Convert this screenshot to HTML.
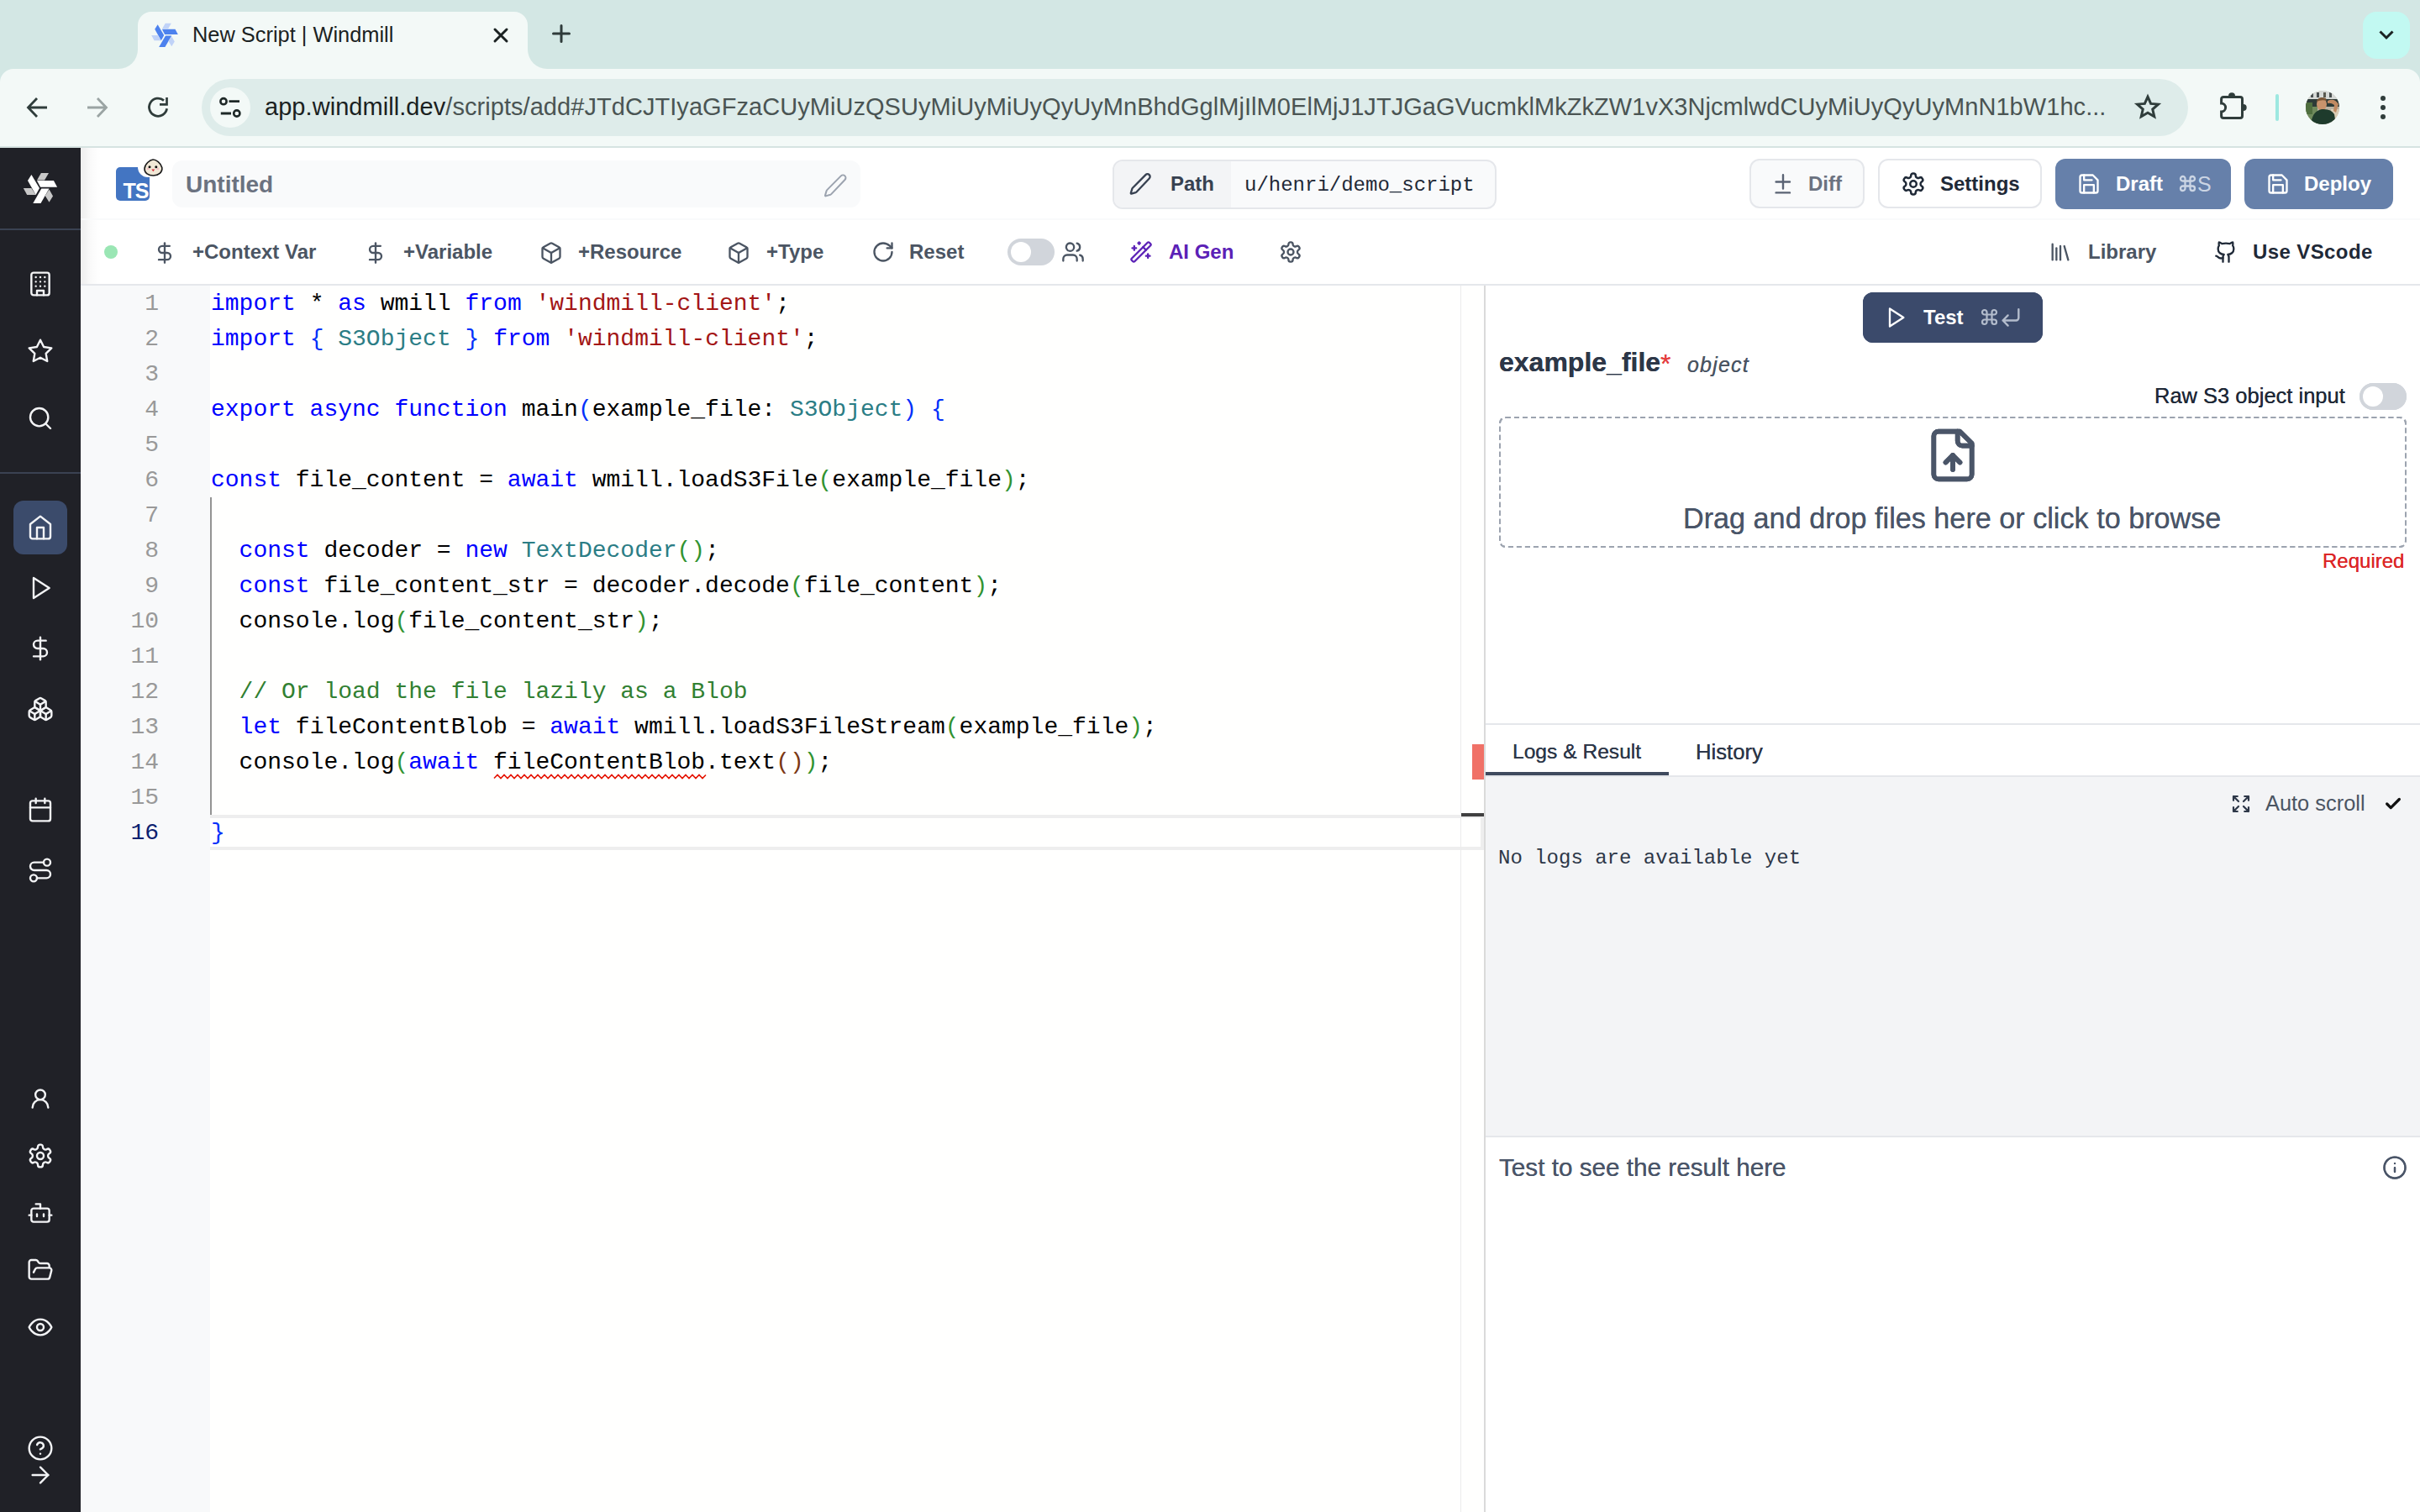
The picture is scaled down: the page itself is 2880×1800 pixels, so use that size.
<!DOCTYPE html>
<html><head><meta charset="utf-8">
<style>
*{box-sizing:border-box;margin:0;padding:0}
html,body{width:2880px;height:1800px;overflow:hidden;background:#fff;font-family:"Liberation Sans",sans-serif}
.a{position:absolute}
.t{position:absolute;white-space:pre;line-height:40px;height:40px}
.m{font-family:"Liberation Mono",monospace}
svg{position:absolute;overflow:visible}
/* chrome */
#tabstrip{left:0;top:0;width:2880px;height:100px;background:#d3e7e4}
#toolbar{left:0;top:82px;width:2880px;height:94px;background:#f3f9f7;border-radius:16px 16px 0 0;border-bottom:2px solid #d6e3e1}
#tab{left:164px;top:14px;width:464px;height:70px;background:#f3f9f7;border-radius:16px 16px 0 0}
.flare{width:23px;height:23px;top:59px;background:#f3f9f7}
.flare:after{content:"";position:absolute;left:0;top:0;width:23px;height:23px;background:#d3e7e4}
#fl1{left:141px}
#fl1:after{border-bottom-right-radius:23px}
#fl2{left:628px}
#fl2:after{border-bottom-left-radius:23px}
#urlbar{left:240px;top:94px;width:2364px;height:68px;border-radius:34px;background:#deecea}
#siteinfo{left:250px;top:104px;width:48px;height:48px;border-radius:24px;background:#f3f9f7}
/* app */
#sidebar{left:0;top:176px;width:96px;height:1624px;background:#202127;}
#sbshadow{left:96px;top:176px;width:24px;height:1624px;background:linear-gradient(90deg,rgba(0,0,0,0.07),rgba(0,0,0,0.02) 50%,rgba(0,0,0,0))}
</style></head><body>
<!-- ============ BROWSER CHROME ============ -->
<div id="tabstrip" class="a"></div>
<div id="toolbar" class="a"></div>
<div id="tab" class="a"></div>
<div id="fl1" class="a flare"></div>
<div id="fl2" class="a flare"></div>
<div id="urlbar" class="a"></div>
<div id="siteinfo" class="a"></div>

<!-- favicon -->
<svg style="left:174px;top:20px" width="44" height="44" viewBox="0 0 56 56">
<g fill="#4d82ee"><polygon points="17.4,11.9 13,18.9 22.6,35.9 27,28.1"/><polygon points="24,18.9 43.9,18.9 48.1,26.7 28.1,26.7"/><polygon points="29.3,28.5 38.5,28.5 28.5,45.9 19.3,45.9"/></g>
<g fill="#c0d3f8"><polygon points="28.9,10 38,10 33,18.5 24,18.5"/><polygon points="7.8,28.1 17.4,28.1 22.6,36.1 12.2,36.1"/><polygon points="38.5,29.6 43,37.4 38.5,44.8 33.7,37"/></g>
</svg>
<div class="t" style="left:229px;top:21px;font-size:25.4px;color:#1b2222">New Script | Windmill</div>
<svg style="left:587px;top:33px" width="18" height="18" viewBox="0 0 18 18"><path d="M2 2L16 16M16 2L2 16" stroke="#1b2222" stroke-width="3" stroke-linecap="round"/></svg>
<svg style="left:657px;top:29px" width="22" height="22" viewBox="0 0 22 22"><path d="M11 1.5V20.5M1.5 11H20.5" stroke="#2f3b3a" stroke-width="3" stroke-linecap="round"/></svg>
<!-- nav -->
<svg style="left:30px;top:114px" width="28" height="28" viewBox="0 0 28 28"><path d="M3.5 14H26M14 3L3.5 14L14 25" fill="none" stroke="#2f3d3b" stroke-width="2.8"/></svg>
<svg style="left:102px;top:114px" width="28" height="28" viewBox="0 0 28 28"><path d="M2 14H24.5M14 3L24.5 14L14 25" fill="none" stroke="#9aa4a3" stroke-width="2.8"/></svg>
<svg style="left:174px;top:114px" width="28" height="28" viewBox="0 0 28 28"><path d="M24.6 15.3A10.6 10.6 0 1 1 21 5.6" fill="none" stroke="#2f3d3b" stroke-width="2.8"/><path d="M16 10.35H24.5V2" fill="none" stroke="#2f3d3b" stroke-width="2.7"/></svg>
<svg style="left:256px;top:112px" width="36" height="32" viewBox="0 0 36 32"><circle cx="10" cy="8.7" r="3.6" fill="none" stroke="#1e2827" stroke-width="2.6"/><path d="M16.5 8.7H29M6.8 23H19" stroke="#1e2827" stroke-width="2.8"/><circle cx="25.8" cy="23" r="3.6" fill="none" stroke="#1e2827" stroke-width="2.6"/></svg>
<div class="t" style="left:315px;top:107px;font-size:29px;letter-spacing:0.055px;color:#4a5453"><span style="color:#1a2121">app.windmill.dev</span>/scripts/add#JTdCJTIyaGFzaCUyMiUzQSUyMiUyMiUyQyUyMnBhdGglMjIlM0ElMjJ1JTJGaGVucmklMkZkZW1vX3NjcmlwdCUyMiUyQyUyMnN1bW1hc...</div>
<svg style="left:2541px;top:112px" width="30" height="30" viewBox="0 0 24 24"><path d="M12 2.5l2.9 6.6 7.1.6-5.4 4.7 1.6 7-6.2-3.7-6.2 3.7 1.6-7L2 9.7l7.1-.6z" fill="none" stroke="#2f3d3b" stroke-width="2.4" stroke-linejoin="miter"/></svg>
<svg style="left:2636px;top:104px" width="44" height="44" viewBox="0 0 44 44"><path d="M7.6 19V13.9A2.5 2.5 0 0 1 10.1 11.4H30A2.5 2.5 0 0 1 32.5 13.9V34A2.5 2.5 0 0 1 30 36.5H10.1A2.5 2.5 0 0 1 7.6 34V29A5 5 0 0 0 7.6 19Z" fill="none" stroke="#2f3d3b" stroke-width="3"/><path d="M16 10.2A4 4 0 0 1 24 10.2Z" fill="#2f3d3b"/><path d="M33.7 20A4 4 0 0 1 33.7 28Z" fill="#2f3d3b"/></svg>
<div class="a" style="left:2708px;top:112px;width:4px;height:32px;border-radius:2px;background:#9de8e0"></div>
<svg style="left:2744px;top:108px" width="40" height="40" viewBox="0 0 40 40"><defs><clipPath id="avc"><circle cx="20" cy="20" r="20"/></clipPath></defs><g clip-path="url(#avc)">
<rect width="40" height="40" fill="#b9b3a3"/>
<rect x="0" y="0" width="40" height="10" fill="#d6d9d6"/>
<rect x="6" y="2" width="3" height="6" fill="#4a5050"/><rect x="13" y="2" width="3" height="6" fill="#4a5050"/><rect x="21" y="2" width="3" height="6" fill="#5a5a50"/><rect x="28" y="2" width="3" height="6" fill="#4a5050"/>
<rect x="0" y="10" width="40" height="9" fill="#2c3a37"/>
<rect x="0" y="19" width="14" height="21" fill="#6f8a5c"/>
<rect x="0" y="14" width="8" height="14" fill="#4f6f3f"/>
<rect x="30" y="22" width="10" height="18" fill="#d9ccb4"/>
<path d="M26 12Q34 8 39 16L36 26L33 24L34 17Q30 14 26 15Z" fill="#c08a62"/>
<ellipse cx="19" cy="16" rx="6" ry="7.5" fill="#c8936c"/>
<path d="M13 12Q16 6 24 9L25 12Q19 10 13 13Z" fill="#7a5636"/>
<path d="M6 40Q8 24 19 22Q30 21 34 28L36 40Z" fill="#1e3b2c"/>
</g></svg>

<div class="a" style="left:2833px;top:114px;width:6px;height:6px;border-radius:3px;background:#2f3d3b"></div>
<div class="a" style="left:2833px;top:125px;width:6px;height:6px;border-radius:3px;background:#2f3d3b"></div>
<div class="a" style="left:2833px;top:136px;width:6px;height:6px;border-radius:3px;background:#2f3d3b"></div>
<div class="a" style="left:2812px;top:14px;width:56px;height:56px;border-radius:16px;background:#c2f9f2"></div>
<svg style="left:2831px;top:36px" width="18" height="11" viewBox="0 0 18 11"><path d="M1.5 1.5L9 9L16.5 1.5" fill="none" stroke="#1b2222" stroke-width="3"/></svg>

<!-- ============ APP ============ -->
<div id="sidebar" class="a"></div>

<div id="sbshadow" class="a"></div>
<!-- sidebar logo -->
<svg style="left:20px;top:196px" width="56" height="56" viewBox="0 0 56 56">
<g fill="#ffffff"><polygon points="17.4,11.9 13,18.9 22.6,35.9 27,28.1"/><polygon points="24,18.9 43.9,18.9 48.1,26.7 28.1,26.7"/><polygon points="29.3,28.5 38.5,28.5 28.5,45.9 19.3,45.9"/></g>
<g fill="#c8c8c8"><polygon points="28.9,10 38,10 33,18.5 24,18.5"/><polygon points="7.8,28.1 17.4,28.1 22.6,36.1 12.2,36.1"/><polygon points="38.5,29.6 43,37.4 38.5,44.8 33.7,37"/></g>
</svg>
<div class="a" style="left:0;top:272px;width:96px;height:2px;background:#3a4252"></div>
<div class="a" style="left:0;top:562px;width:96px;height:2px;background:#3a4252"></div>
<div class="a" style="left:16px;top:596px;width:64px;height:64px;border-radius:12px;background:#3b4b6b"></div>
<!-- sidebar icons (lucide-ish, 24 viewBox) -->

<svg style="left:32.0px;top:322.0px" width="32" height="32" viewBox="0 0 24 24" fill="none" stroke="#f3f4f6" stroke-width="1.8" stroke-linecap="round" stroke-linejoin="round"><rect x="4" y="2" width="16" height="20" rx="2"/><path d="M9 22v-4h6v4"/><path d="M8 6h.01M16 6h.01M12 6h.01M12 10h.01M12 14h.01M16 10h.01M16 14h.01M8 10h.01M8 14h.01"/></svg>
<svg style="left:32.0px;top:402.0px" width="32" height="32" viewBox="0 0 24 24" fill="none" stroke="#f3f4f6" stroke-width="1.8" stroke-linecap="round" stroke-linejoin="round"><polygon points="12 2 15.09 8.26 22 9.27 17 14.14 18.18 21.02 12 17.77 5.82 21.02 7 14.14 2 9.27 8.91 8.26 12 2"/></svg>
<svg style="left:32.0px;top:482.0px" width="32" height="32" viewBox="0 0 24 24" fill="none" stroke="#f3f4f6" stroke-width="1.8" stroke-linecap="round" stroke-linejoin="round"><circle cx="11" cy="11" r="8"/><path d="m21 21-4.3-4.3"/></svg>
<svg style="left:32.0px;top:612.0px" width="32" height="32" viewBox="0 0 24 24" fill="none" stroke="#f3f4f6" stroke-width="1.8" stroke-linecap="round" stroke-linejoin="round"><path d="m3 9 9-7 9 7v11a2 2 0 0 1-2 2H5a2 2 0 0 1-2-2z"/><path d="M9 22V12h6v10"/></svg>
<svg style="left:32.0px;top:684.0px" width="32" height="32" viewBox="0 0 24 24" fill="none" stroke="#f3f4f6" stroke-width="1.8" stroke-linecap="round" stroke-linejoin="round"><polygon points="6 3 20 12 6 21 6 3"/></svg>
<svg style="left:32.0px;top:756.0px" width="32" height="32" viewBox="0 0 24 24" fill="none" stroke="#f3f4f6" stroke-width="1.8" stroke-linecap="round" stroke-linejoin="round"><line x1="12" x2="12" y1="2" y2="22"/><path d="M17 5H9.5a3.5 3.5 0 0 0 0 7h5a3.5 3.5 0 0 1 0 7H6"/></svg>
<svg style="left:32.0px;top:828.0px" width="32" height="32" viewBox="0 0 24 24" fill="none" stroke="#f3f4f6" stroke-width="1.8" stroke-linecap="round" stroke-linejoin="round"><path d="M2.97 12.92A2 2 0 0 0 2 14.63v3.24a2 2 0 0 0 .97 1.71l3 1.8a2 2 0 0 0 2.06 0L12 19v-5.5l-5-3-4.03 2.42Z"/><path d="m7 16.5-4.74-2.85"/><path d="m7 16.5 5-3"/><path d="M7 16.5v5.17"/><path d="M12 13.5V19l3.97 2.38a2 2 0 0 0 2.06 0l3-1.8a2 2 0 0 0 .97-1.71v-3.24a2 2 0 0 0-.97-1.71L17 10.5l-5 3Z"/><path d="m17 16.5-5-3"/><path d="m17 16.5 4.74-2.85"/><path d="M17 16.5v5.17"/><path d="M7.97 4.42A2 2 0 0 0 7 6.13v4.37l5 3 5-3V6.13a2 2 0 0 0-.97-1.71l-3-1.8a2 2 0 0 0-2.06 0l-3 1.8Z"/><path d="M12 8 7.26 5.15"/><path d="m12 8 4.74-2.85"/><path d="M12 13.5V8"/></svg>
<svg style="left:32.0px;top:948.0px" width="32" height="32" viewBox="0 0 24 24" fill="none" stroke="#f3f4f6" stroke-width="1.8" stroke-linecap="round" stroke-linejoin="round"><rect width="18" height="18" x="3" y="4" rx="2"/><path d="M16 2v4M8 2v4M3 10h18"/></svg>
<svg style="left:32.0px;top:1020.0px" width="32" height="32" viewBox="0 0 24 24" fill="none" stroke="#f3f4f6" stroke-width="1.8" stroke-linecap="round" stroke-linejoin="round"><circle cx="6" cy="19" r="3"/><path d="M9 19h8.5a3.5 3.5 0 0 0 0-7h-11a3.5 3.5 0 0 1 0-7H15"/><circle cx="18" cy="5" r="3"/></svg>
<svg style="left:34.0px;top:1294.0px" width="28" height="28" viewBox="0 0 24 24" fill="none" stroke="#f3f4f6" stroke-width="2.05" stroke-linecap="round" stroke-linejoin="round"><circle cx="12" cy="8" r="5"/><path d="M20 21a8 8 0 0 0-16 0"/></svg>
<svg style="left:32.0px;top:1360.0px" width="32" height="32" viewBox="0 0 24 24" fill="none" stroke="#f3f4f6" stroke-width="1.8" stroke-linecap="round" stroke-linejoin="round"><path d="M12.22 2h-.44a2 2 0 0 0-2 2v.18a2 2 0 0 1-1 1.73l-.43.25a2 2 0 0 1-2 0l-.15-.08a2 2 0 0 0-2.73.73l-.22.38a2 2 0 0 0 .73 2.73l.15.1a2 2 0 0 1 1 1.72v.51a2 2 0 0 1-1 1.74l-.15.09a2 2 0 0 0-.73 2.73l.22.38a2 2 0 0 0 2.73.73l.15-.08a2 2 0 0 1 2 0l.43.25a2 2 0 0 1 1 1.73V20a2 2 0 0 0 2 2h.44a2 2 0 0 0 2-2v-.18a2 2 0 0 1 1-1.73l.43-.25a2 2 0 0 1 2 0l.15.08a2 2 0 0 0 2.73-.73l.22-.39a2 2 0 0 0-.73-2.73l-.15-.08a2 2 0 0 1-1-1.74v-.5a2 2 0 0 1 1-1.74l.15-.09a2 2 0 0 0 .73-2.73l-.22-.38a2 2 0 0 0-2.73-.73l-.15.08a2 2 0 0 1-2 0l-.43-.25a2 2 0 0 1-1-1.73V4a2 2 0 0 0-2-2z"/><circle cx="12" cy="12" r="3"/></svg>
<svg style="left:32.0px;top:1428.0px" width="32" height="32" viewBox="0 0 24 24" fill="none" stroke="#f3f4f6" stroke-width="1.8" stroke-linecap="round" stroke-linejoin="round"><path d="M12 8V4H8"/><rect width="16" height="12" x="4" y="8" rx="2"/><path d="M2 14h2M20 14h2M15 13v2M9 13v2"/></svg>
<svg style="left:32.0px;top:1496.0px" width="32" height="32" viewBox="0 0 24 24" fill="none" stroke="#f3f4f6" stroke-width="1.8" stroke-linecap="round" stroke-linejoin="round"><path d="m6 14 1.5-2.9A2 2 0 0 1 9.24 10H20a2 2 0 0 1 1.94 2.5l-1.54 6a2 2 0 0 1-1.95 1.5H4a2 2 0 0 1-2-2V5a2 2 0 0 1 2-2h3.9a2 2 0 0 1 1.69.9l.81 1.2a2 2 0 0 0 1.67.9H18a2 2 0 0 1 2 2v2"/></svg>
<svg style="left:32.0px;top:1564.0px" width="32" height="32" viewBox="0 0 24 24" fill="none" stroke="#f3f4f6" stroke-width="1.8" stroke-linecap="round" stroke-linejoin="round"><path d="M2 12s3-7 10-7 10 7 10 7-3 7-10 7-10-7-10-7Z"/><circle cx="12" cy="12" r="3"/></svg>
<svg style="left:32.0px;top:1708.0px" width="32" height="32" viewBox="0 0 24 24" fill="none" stroke="#f3f4f6" stroke-width="1.8" stroke-linecap="round" stroke-linejoin="round"><circle cx="12" cy="12" r="10"/><path d="M9.09 9a3 3 0 0 1 5.83 1c0 2-3 3-3 3"/><path d="M12 17h.01"/></svg>
<svg style="left:32.0px;top:1740.0px" width="32" height="32" viewBox="0 0 24 24" fill="none" stroke="#f3f4f6" stroke-width="1.8" stroke-linecap="round" stroke-linejoin="round"><path d="M5 12h14"/><path d="m12 5 7 7-7 7"/></svg>
<!-- ======= HEADER ROW 1 ======= -->
<div class="a" style="left:138px;top:199px;width:40px;height:40px;border-radius:5px;background:#4375c2"></div>
<div class="a" style="left:163.7px;top:186.6px;width:24.8px;height:24.8px;border-radius:13px;background:#fff"></div>
<div class="t" style="left:146.5px;top:206.5px;font-size:25px;font-weight:bold;color:#fff;letter-spacing:-0.9px">TS</div>
<svg style="left:170.5px;top:188.5px" width="23" height="21" viewBox="0 0 23 21"><path d="M11 1C14.5 0.8 20.5 5 21.8 10.5C22.5 16 17.5 20 11.5 20C5.5 20 1 17 1 12C1 6.5 7.5 1.2 11 1Z" fill="#f1e8d6" stroke="#1a1a1a" stroke-width="1.6"/><circle cx="7" cy="9.8" r="1.5" fill="#111"/><circle cx="14.8" cy="9.8" r="1.5" fill="#111"/><ellipse cx="5" cy="12" rx="1.6" ry="1" fill="#f2b9c2"/><ellipse cx="16.8" cy="12" rx="1.6" ry="1" fill="#f2b9c2"/><path d="M9.3 12.6H13.3L11.3 15.2Z" fill="#d9303a"/></svg>
<div class="a" style="left:205px;top:191px;width:819px;height:56px;border-radius:12px;background:#f9fafb"></div>
<div class="t" style="left:221px;top:200px;font-size:28px;font-weight:bold;color:#6b7280">Untitled</div>
<svg style="left:978px;top:206px" width="32" height="30" viewBox="0 0 24 24"><path d="M21.2 6.4a2.6 2.6 0 0 0-3.7-3.7L4.2 16.1a2 2 0 0 0-.5.8l-1.3 4.4a.5.5 0 0 0 .6.6l4.4-1.3a2 2 0 0 0 .8-.5z" fill="none" stroke="#9ca3af" stroke-width="1.6" stroke-linejoin="round"/></svg>

<div class="a" style="left:1324px;top:189.5px;width:457px;height:59px;border-radius:12px;border:2px solid #e5e7eb;background:#f9fafb;overflow:hidden"><div class="a" style="left:0;top:0;width:139px;height:59px;background:#f3f4f6"></div></div>
<svg style="left:1343px;top:205px" width="28" height="28" viewBox="0 0 24 24"><path d="M21.2 6.4a2.6 2.6 0 0 0-3.7-3.7L4.2 16.1a2 2 0 0 0-.5.8l-1.3 4.4a.5.5 0 0 0 .6.6l4.4-1.3a2 2 0 0 0 .8-.5z" fill="none" stroke="#374151" stroke-width="2" stroke-linejoin="round"/></svg>
<div class="t" style="left:1393px;top:199px;font-size:24px;font-weight:bold;color:#374151">Path</div>
<div class="t m" style="left:1481px;top:201px;font-size:24px;color:#1f2937">u/henri/demo_script</div>

<div class="a" style="left:2082px;top:189px;width:137px;height:59px;border-radius:12px;border:2px solid #e5e7eb;background:#f9fafb"></div>
<svg style="left:2100px;top:200px" width="40" height="40" viewBox="0 0 40 40"><path d="M22 8.3V24.6M13.6 16.5H30M13.6 29.4H30" fill="none" stroke="#5a6374" stroke-width="2.4" stroke-linecap="round"/></svg>
<div class="t" style="left:2152px;top:199px;font-size:24px;font-weight:bold;color:#6b7280">Diff</div>

<div class="a" style="left:2235px;top:189px;width:195px;height:59px;border-radius:12px;border:2px solid #e5e7eb;background:#fff"></div>
<svg style="left:2261.5px;top:204.0px" width="30" height="30" viewBox="0 0 24 24" fill="none" stroke="#1f2937" stroke-width="2" stroke-linecap="round" stroke-linejoin="round"><path d="M12.22 2h-.44a2 2 0 0 0-2 2v.18a2 2 0 0 1-1 1.73l-.43.25a2 2 0 0 1-2 0l-.15-.08a2 2 0 0 0-2.73.73l-.22.38a2 2 0 0 0 .73 2.73l.15.1a2 2 0 0 1 1 1.72v.51a2 2 0 0 1-1 1.74l-.15.09a2 2 0 0 0-.73 2.73l.22.38a2 2 0 0 0 2.73.73l.15-.08a2 2 0 0 1 2 0l.43.25a2 2 0 0 1 1 1.73V20a2 2 0 0 0 2 2h.44a2 2 0 0 0 2-2v-.18a2 2 0 0 1 1-1.73l.43-.25a2 2 0 0 1 2 0l.15.08a2 2 0 0 0 2.73-.73l.22-.39a2 2 0 0 0-.73-2.73l-.15-.08a2 2 0 0 1-1-1.74v-.5a2 2 0 0 1 1-1.74l.15-.09a2 2 0 0 0 .73-2.73l-.22-.38a2 2 0 0 0-2.73-.73l-.15.08a2 2 0 0 1-2 0l-.43-.25a2 2 0 0 1-1-1.73V4a2 2 0 0 0-2-2z"/><circle cx="12" cy="12" r="3"/></svg>
<div class="t" style="left:2309px;top:199px;font-size:24px;font-weight:bold;color:#1f2937">Settings</div>

<div class="a" style="left:2446px;top:189px;width:209px;height:60px;border-radius:12px;background:#6680aa"></div>
<svg style="left:2472.0px;top:205.0px" width="28" height="28" viewBox="0 0 24 24" fill="none" stroke="#ffffff" stroke-width="2" stroke-linecap="round" stroke-linejoin="round"><path d="M19 21H5a2 2 0 0 1-2-2V5a2 2 0 0 1 2-2h11l5 5v11a2 2 0 0 1-2 2z"/><path d="M17 21v-8H7v8"/><path d="M7 3v5h8"/></svg>
<div class="t" style="left:2518px;top:199px;font-size:24px;font-weight:bold;color:#fff">Draft</div>
<svg style="left:2594px;top:209px" width="19" height="19" viewBox="0 0 19 19"><path d="M6.5 15.25V3.75A2.75 2.75 0 1 0 3.75 6.5H15.25A2.75 2.75 0 1 0 12.5 3.75V15.25A2.75 2.75 0 1 0 15.25 12.5H3.75A2.75 2.75 0 1 0 6.5 15.25Z" fill="none" stroke="#cbd5e4" stroke-width="2.3"/></svg>
<div class="t" style="left:2615px;top:199px;font-size:25px;color:#cbd5e4">S</div>

<div class="a" style="left:2671px;top:189px;width:177px;height:60px;border-radius:12px;background:#6680aa"></div>
<svg style="left:2697.0px;top:205.0px" width="28" height="28" viewBox="0 0 24 24" fill="none" stroke="#ffffff" stroke-width="2" stroke-linecap="round" stroke-linejoin="round"><path d="M19 21H5a2 2 0 0 1-2-2V5a2 2 0 0 1 2-2h11l5 5v11a2 2 0 0 1-2 2z"/><path d="M17 21v-8H7v8"/><path d="M7 3v5h8"/></svg>
<div class="t" style="left:2742px;top:199px;font-size:24px;font-weight:bold;color:#fff">Deploy</div>

<div class="a" style="left:96px;top:260px;width:2784px;height:2px;background:#f9fafb"></div>

<!-- ======= HEADER ROW 2 ======= -->
<div class="a" style="left:124px;top:292px;width:16px;height:16px;border-radius:8px;background:#9ae6b4"></div>
<svg style="left:182.0px;top:287.0px" width="28" height="28" viewBox="0 0 24 24" fill="none" stroke="#4b5563" stroke-width="2" stroke-linecap="round" stroke-linejoin="round"><line x1="12" x2="12" y1="2" y2="22"/><path d="M17 5H9.5a3.5 3.5 0 0 0 0 7h5a3.5 3.5 0 0 1 0 7H6"/></svg>
<div class="t" style="left:229px;top:280px;font-size:24px;color:#4b5563;font-weight:bold;">+Context Var</div>
<svg style="left:432.5px;top:287.0px" width="28" height="28" viewBox="0 0 24 24" fill="none" stroke="#4b5563" stroke-width="2" stroke-linecap="round" stroke-linejoin="round"><line x1="12" x2="12" y1="2" y2="22"/><path d="M17 5H9.5a3.5 3.5 0 0 0 0 7h5a3.5 3.5 0 0 1 0 7H6"/></svg>
<div class="t" style="left:480px;top:280px;font-size:24px;color:#4b5563;font-weight:bold;">+Variable</div>
<svg style="left:642.0px;top:287.0px" width="28" height="28" viewBox="0 0 24 24" fill="none" stroke="#4b5563" stroke-width="2" stroke-linecap="round" stroke-linejoin="round"><path d="M21 8a2 2 0 0 0-1-1.73l-7-4a2 2 0 0 0-2 0l-7 4A2 2 0 0 0 3 8v8a2 2 0 0 0 1 1.73l7 4a2 2 0 0 0 2 0l7-4A2 2 0 0 0 21 16Z"/><path d="m3.3 7 8.7 5 8.7-5"/><path d="M12 22V12"/></svg>
<div class="t" style="left:688px;top:280px;font-size:24px;color:#4b5563;font-weight:bold;">+Resource</div>
<svg style="left:865.0px;top:287.0px" width="28" height="28" viewBox="0 0 24 24" fill="none" stroke="#4b5563" stroke-width="2" stroke-linecap="round" stroke-linejoin="round"><path d="M21 8a2 2 0 0 0-1-1.73l-7-4a2 2 0 0 0-2 0l-7 4A2 2 0 0 0 3 8v8a2 2 0 0 0 1 1.73l7 4a2 2 0 0 0 2 0l7-4A2 2 0 0 0 21 16Z"/><path d="m3.3 7 8.7 5 8.7-5"/><path d="M12 22V12"/></svg>
<div class="t" style="left:912px;top:280px;font-size:24px;color:#4b5563;font-weight:bold;">+Type</div>
<svg style="left:1037.0px;top:286.0px" width="28" height="28" viewBox="0 0 24 24" fill="none" stroke="#4b5563" stroke-width="2" stroke-linecap="round" stroke-linejoin="round"><path d="M21 12a9 9 0 1 1-9-9c2.52 0 4.93 1 6.74 2.74L21 8"/><path d="M21 3v5h-5"/></svg>
<div class="t" style="left:1082px;top:280px;font-size:24px;color:#4b5563;font-weight:bold;">Reset</div>
<div class="a" style="left:1199px;top:284px;width:56px;height:32px;border-radius:16px;background:#d1d5db"></div>
<div class="a" style="left:1203px;top:288px;width:24px;height:24px;border-radius:12px;background:#fff"></div>
<svg style="left:1263.0px;top:286.0px" width="28" height="28" viewBox="0 0 24 24" fill="none" stroke="#4b5563" stroke-width="2" stroke-linecap="round" stroke-linejoin="round"><path d="M16 21v-2a4 4 0 0 0-4-4H6a4 4 0 0 0-4 4v2"/><circle cx="9" cy="7" r="4"/><path d="M22 21v-2a4 4 0 0 0-3-3.87"/><path d="M16 3.13a4 4 0 0 1 0 7.75"/></svg>
<svg style="left:1344.0px;top:286.0px" width="28" height="28" viewBox="0 0 24 24" fill="none" stroke="#5b21b6" stroke-width="2" stroke-linecap="round" stroke-linejoin="round"><path d="m21.64 3.64-1.28-1.28a1.21 1.21 0 0 0-1.72 0L2.36 18.64a1.21 1.21 0 0 0 0 1.72l1.28 1.28a1.2 1.2 0 0 0 1.72 0L21.64 5.36a1.2 1.2 0 0 0 0-1.72"/><path d="m14 7 3 3"/><path d="M5 6v4M19 14v4M10 2v2M7 8H3M21 16h-4M11 3H9"/></svg>
<div class="t" style="left:1391px;top:280px;font-size:24px;color:#5b21b6;font-weight:bold;">AI Gen</div>
<svg style="left:1522.0px;top:286.0px" width="28" height="28" viewBox="0 0 24 24" fill="none" stroke="#4b5563" stroke-width="2" stroke-linecap="round" stroke-linejoin="round"><path d="M12.22 2h-.44a2 2 0 0 0-2 2v.18a2 2 0 0 1-1 1.73l-.43.25a2 2 0 0 1-2 0l-.15-.08a2 2 0 0 0-2.73.73l-.22.38a2 2 0 0 0 .73 2.73l.15.1a2 2 0 0 1 1 1.72v.51a2 2 0 0 1-1 1.74l-.15.09a2 2 0 0 0-.73 2.73l.22.38a2 2 0 0 0 2.73.73l.15-.08a2 2 0 0 1 2 0l.43.25a2 2 0 0 1 1 1.73V20a2 2 0 0 0 2 2h.44a2 2 0 0 0 2-2v-.18a2 2 0 0 1 1-1.73l.43-.25a2 2 0 0 1 2 0l.15.08a2 2 0 0 0 2.73-.73l.22-.39a2 2 0 0 0-.73-2.73l-.15-.08a2 2 0 0 1-1-1.74v-.5a2 2 0 0 1 1-1.74l.15-.09a2 2 0 0 0 .73-2.73l-.22-.38a2 2 0 0 0-2.73-.73l-.15.08a2 2 0 0 1-2 0l-.43-.25a2 2 0 0 1-1-1.73V4a2 2 0 0 0-2-2z"/><circle cx="12" cy="12" r="3"/></svg>
<svg style="left:2438.0px;top:286.0px" width="28" height="28" viewBox="0 0 24 24" fill="none" stroke="#4b5563" stroke-width="2" stroke-linecap="round" stroke-linejoin="round"><path d="m16 6 4 14"/><path d="M12 6v14"/><path d="M8 8v12"/><path d="M4 4v16"/></svg>
<div class="t" style="left:2485px;top:280px;font-size:24px;color:#4b5563;font-weight:bold;">Library</div>
<svg style="left:2635.0px;top:286.0px" width="28" height="28" viewBox="0 0 24 24" fill="none" stroke="#1f2937" stroke-width="2" stroke-linecap="round" stroke-linejoin="round"><path d="M15 22v-4a4.8 4.8 0 0 0-1-3.5c3 0 6-2 6-5.5.08-1.25-.27-2.48-1-3.5.28-1.15.28-2.35 0-3.5 0 0-1 0-3 1.5-2.64-.5-5.36-.5-8 0C6 2 5 2 5 2c-.3 1.15-.3 2.35 0 3.5A5.403 5.403 0 0 0 4 9c0 3.5 3 5.5 6 5.5-.39.49-.68 1.05-.85 1.65-.17.6-.22 1.23-.15 1.85v4"/><path d="M9 18c-4.51 2-5-2-7-2"/></svg>
<div class="t" style="left:2681px;top:280px;font-size:24px;color:#1f2937;font-weight:bold;letter-spacing:0.4px;">Use VScode</div>
<!-- ======= <div class="a" style="left:96px;top:340px;width:154px;height:1460px;background:#f8f9fa"></div>
<div class="a" style="left:250px;top:340px;width:1516px;height:1460px;background:#fffffe"></div>
<div class="a" style="left:250px;top:970px;width:1516px;height:42px;border:4px solid #eeeeee;border-left:none"></div>
<div class="a" style="left:250px;top:592px;width:2px;height:378px;background:#939393"></div>
<div class="a" style="left:1738px;top:340px;width:1px;height:1460px;background:#ececec"></div>
<div class="a" style="left:1752px;top:886px;width:14px;height:42px;background:#f07167"></div>
<div class="a" style="left:1739px;top:968px;width:27px;height:4px;background:#404040"></div>
<div class="a m" style="left:96px;top:341px;width:93px;height:42px;line-height:42px;font-size:28px;text-align:right;color:#999999">1</div>
<div class="a m" style="left:251px;top:341px;height:42px;line-height:42px;font-size:28px;white-space:pre;color:#000"><span style="color:#0000ff">import</span> * <span style="color:#0000ff">as</span> wmill <span style="color:#0000ff">from</span> <span style="color:#a31515">'windmill-client'</span>;</div>
<div class="a m" style="left:96px;top:383px;width:93px;height:42px;line-height:42px;font-size:28px;text-align:right;color:#999999">2</div>
<div class="a m" style="left:251px;top:383px;height:42px;line-height:42px;font-size:28px;white-space:pre;color:#000"><span style="color:#0000ff">import</span> <span style="color:#0431fa">{</span> <span style="color:#2b7d85">S3Object</span> <span style="color:#0431fa">}</span> <span style="color:#0000ff">from</span> <span style="color:#a31515">'windmill-client'</span>;</div>
<div class="a m" style="left:96px;top:425px;width:93px;height:42px;line-height:42px;font-size:28px;text-align:right;color:#999999">3</div>
<div class="a m" style="left:96px;top:467px;width:93px;height:42px;line-height:42px;font-size:28px;text-align:right;color:#999999">4</div>
<div class="a m" style="left:251px;top:467px;height:42px;line-height:42px;font-size:28px;white-space:pre;color:#000"><span style="color:#0000ff">export async function</span> main<span style="color:#0431fa">(</span>example_file: <span style="color:#2b7d85">S3Object</span><span style="color:#0431fa">)</span> <span style="color:#0431fa">{</span></div>
<div class="a m" style="left:96px;top:509px;width:93px;height:42px;line-height:42px;font-size:28px;text-align:right;color:#999999">5</div>
<div class="a m" style="left:96px;top:551px;width:93px;height:42px;line-height:42px;font-size:28px;text-align:right;color:#999999">6</div>
<div class="a m" style="left:251px;top:551px;height:42px;line-height:42px;font-size:28px;white-space:pre;color:#000"><span style="color:#0000ff">const</span> file_content = <span style="color:#0000ff">await</span> wmill.loadS3File<span style="color:#319331">(</span>example_file<span style="color:#319331">)</span>;</div>
<div class="a m" style="left:96px;top:593px;width:93px;height:42px;line-height:42px;font-size:28px;text-align:right;color:#999999">7</div>
<div class="a m" style="left:96px;top:635px;width:93px;height:42px;line-height:42px;font-size:28px;text-align:right;color:#999999">8</div>
<div class="a m" style="left:251px;top:635px;height:42px;line-height:42px;font-size:28px;white-space:pre;color:#000">  <span style="color:#0000ff">const</span> decoder = <span style="color:#0000ff">new</span> <span style="color:#2b7d85">TextDecoder</span><span style="color:#319331">()</span>;</div>
<div class="a m" style="left:96px;top:677px;width:93px;height:42px;line-height:42px;font-size:28px;text-align:right;color:#999999">9</div>
<div class="a m" style="left:251px;top:677px;height:42px;line-height:42px;font-size:28px;white-space:pre;color:#000">  <span style="color:#0000ff">const</span> file_content_str = decoder.decode<span style="color:#319331">(</span>file_content<span style="color:#319331">)</span>;</div>
<div class="a m" style="left:96px;top:719px;width:93px;height:42px;line-height:42px;font-size:28px;text-align:right;color:#999999">10</div>
<div class="a m" style="left:251px;top:719px;height:42px;line-height:42px;font-size:28px;white-space:pre;color:#000">  console.log<span style="color:#319331">(</span>file_content_str<span style="color:#319331">)</span>;</div>
<div class="a m" style="left:96px;top:761px;width:93px;height:42px;line-height:42px;font-size:28px;text-align:right;color:#999999">11</div>
<div class="a m" style="left:96px;top:803px;width:93px;height:42px;line-height:42px;font-size:28px;text-align:right;color:#999999">12</div>
<div class="a m" style="left:251px;top:803px;height:42px;line-height:42px;font-size:28px;white-space:pre;color:#000">  <span style="color:#318032">// Or load the file lazily as a Blob</span></div>
<div class="a m" style="left:96px;top:845px;width:93px;height:42px;line-height:42px;font-size:28px;text-align:right;color:#999999">13</div>
<div class="a m" style="left:251px;top:845px;height:42px;line-height:42px;font-size:28px;white-space:pre;color:#000">  <span style="color:#0000ff">let</span> fileContentBlob = <span style="color:#0000ff">await</span> wmill.loadS3FileStream<span style="color:#319331">(</span>example_file<span style="color:#319331">)</span>;</div>
<div class="a m" style="left:96px;top:887px;width:93px;height:42px;line-height:42px;font-size:28px;text-align:right;color:#999999">14</div>
<div class="a m" style="left:251px;top:887px;height:42px;line-height:42px;font-size:28px;white-space:pre;color:#000">  console.log<span style="color:#319331">(</span><span style="color:#0000ff">await</span> fileContentBlob.text<span style="color:#7b3814">()</span><span style="color:#319331">)</span>;</div>
<div class="a m" style="left:96px;top:929px;width:93px;height:42px;line-height:42px;font-size:28px;text-align:right;color:#999999">15</div>
<div class="a m" style="left:96px;top:971px;width:93px;height:42px;line-height:42px;font-size:28px;text-align:right;color:#0b216f">16</div>
<div class="a m" style="left:251px;top:971px;height:42px;line-height:42px;font-size:28px;white-space:pre;color:#000"><span style="color:#0431fa">}</span></div>
<svg style="left:0;top:0" width="2880" height="1800"><path d="M588 926.5 L592.0 922.5 L596.0 926.5 L600.0 922.5 L604.0 926.5 L608.0 922.5 L612.0 926.5 L616.0 922.5 L620.0 926.5 L624.0 922.5 L628.0 926.5 L632.0 922.5 L636.0 926.5 L640.0 922.5 L644.0 926.5 L648.0 922.5 L652.0 926.5 L656.0 922.5 L660.0 926.5 L664.0 922.5 L668.0 926.5 L672.0 922.5 L676.0 926.5 L680.0 922.5 L684.0 926.5 L688.0 922.5 L692.0 926.5 L696.0 922.5 L700.0 926.5 L704.0 922.5 L708.0 926.5 L712.0 922.5 L716.0 926.5 L720.0 922.5 L724.0 926.5 L728.0 922.5 L732.0 926.5 L736.0 922.5 L740.0 926.5 L744.0 922.5 L748.0 926.5 L752.0 922.5 L756.0 926.5 L760.0 922.5 L764.0 926.5 L768.0 922.5 L772.0 926.5 L776.0 922.5 L780.0 926.5 L784.0 922.5 L788.0 926.5 L792.0 922.5 L796.0 926.5 L800.0 922.5 L804.0 926.5 L808.0 922.5 L812.0 926.5 L816.0 922.5 L820.0 926.5 L824.0 922.5 L828.0 926.5 L832.0 922.5 L836.0 926.5 L840.0 922.5" fill="none" stroke="#e51400" stroke-width="1.6"/></svg>
<!-- ======= RIGHT PANE ======= -->
<div class="a" style="left:1766px;top:340px;width:2px;height:1460px;background:#dadada"></div>
<div class="a" style="left:2217px;top:348px;width:214px;height:60px;border-radius:12px;background:#3b4a6b"></div>
<svg style="left:2242px;top:364px" width="28" height="28" viewBox="0 0 24 24" fill="none" stroke="#fff" stroke-width="2" stroke-linejoin="round"><polygon points="6 3 20 12 6 21 6 3"/></svg>
<div class="t" style="left:2289px;top:358px;font-size:24px;color:#fff;font-weight:bold;">Test</div>
<svg style="left:2357.5px;top:368px" width="19" height="19" viewBox="0 0 19 19"><path d="M6.5 15.25V3.75A2.75 2.75 0 1 0 3.75 6.5H15.25A2.75 2.75 0 1 0 12.5 3.75V15.25A2.75 2.75 0 1 0 15.25 12.5H3.75A2.75 2.75 0 1 0 6.5 15.25Z" fill="none" stroke="#b3bccc" stroke-width="2.2"/></svg>
<svg style="left:2380px;top:364px" width="26" height="26" viewBox="0 0 26 26"><path d="M22.3 4.3V14.5A3 3 0 0 1 19.3 17.5H3.6M9.6 11.4L3.6 17.5L9.6 23.6" fill="none" stroke="#b3bccc" stroke-width="2.4" stroke-linecap="round" stroke-linejoin="round"/></svg>
<div class="t" style="left:1784px;top:411px;font-size:32px;color:#2d3748;font-weight:bold;">example_file</div>
<div class="t" style="left:1976px;top:413px;font-size:32px;color:#e53e3e;">*</div>
<div class="t" style="left:2008px;top:414px;font-size:25px;color:#4b5563;font-style:italic;letter-spacing:1.2px;">object</div>
<div class="t" style="left:2564px;top:451px;font-size:25.5px;color:#1f2937;">Raw S3 object input</div>
<div class="a" style="left:2808px;top:456px;width:56px;height:32px;border-radius:16px;background:#d1d5db"></div>
<div class="a" style="left:2812px;top:460px;width:24px;height:24px;border-radius:12px;background:#fff"></div>
<div class="a" style="left:1784px;top:496px;width:1080px;height:156px;border-radius:8px;border:2px dashed #9ca3af"></div>
<svg style="left:2290.0px;top:508.0px" width="68" height="68" viewBox="0 0 24 24" fill="none" stroke="#4a5568" stroke-width="2.0" stroke-linecap="round" stroke-linejoin="round"><path d="M15 2H6a2 2 0 0 0-2 2v16a2 2 0 0 0 2 2h12a2 2 0 0 0 2-2V7Z"/><path d="M14 2v4a2 2 0 0 0 2 2h4"/><path d="M12 12v6"/><path d="m15 15-3-3-3 3"/></svg>
<div class="t" style="left:2003px;top:597px;font-size:34.2px;color:#4a5568;">Drag and drop files here or click to browse</div>
<div class="t" style="left:2764px;top:648px;font-size:24px;color:#dc2626;">Required</div>
<div class="a" style="left:1768px;top:861px;width:1112px;height:2px;background:#e5e7eb"></div>
<div class="t" style="left:1800px;top:875px;font-size:24.6px;color:#2d3748;">Logs &amp; Result</div>
<div class="t" style="left:2018px;top:875px;font-size:25.7px;color:#2d3748;">History</div>
<div class="a" style="left:1768px;top:925px;width:1112px;height:427px;background:#f3f4f6"></div>
<div class="a" style="left:1768px;top:923px;width:1112px;height:2px;background:#e5e7eb"></div>
<div class="a" style="left:1768px;top:919px;width:218px;height:4px;background:#3f4a5e"></div>
<div class="a" style="left:1768px;top:1352px;width:1112px;height:2px;background:#e5e7eb"></div>
<svg style="left:2655.0px;top:945.0px" width="24" height="24" viewBox="0 0 24 24" fill="none" stroke="#2d3748" stroke-width="2.2" stroke-linecap="round" stroke-linejoin="round"><path d="m21 21-6-6m6 6v-4.8m0 4.8h-4.8"/><path d="M3 16.2V21m0 0h4.8M3 21l6-6"/><path d="M21 7.8V3m0 0h-4.8M21 3l-6 6"/><path d="M3 7.8V3m0 0h4.8M3 3l6 6"/></svg>
<div class="t" style="left:2696px;top:936px;font-size:25.4px;color:#4b5563;">Auto scroll</div>
<svg style="left:2837.0px;top:946.0px" width="22" height="22" viewBox="0 0 24 24" fill="none" stroke="#111" stroke-width="3.6" stroke-linecap="round" stroke-linejoin="round"><path d="M20 6 9 17l-5-5"/></svg>
<div class="t" style="left:1783px;top:1002px;font-size:24px;color:#2d3748;font-family:'Liberation Mono',monospace;">No logs are available yet</div>
<div class="t" style="left:1784px;top:1370px;font-size:29.7px;color:#4a5568;">Test to see the result here</div>
<svg style="left:2835.0px;top:1374.5px" width="30" height="30" viewBox="0 0 24 24" fill="none" stroke="#4a5568" stroke-width="1.8" stroke-linecap="round" stroke-linejoin="round"><circle cx="12" cy="12" r="10"/><path d="M12 16v-4"/><path d="M12 8h.01"/></svg> ======= -->
<div class="a" style="left:96px;top:340px;width:154px;height:1460px;background:#f8f9fa"></div>
<div class="a" style="left:250px;top:340px;width:1516px;height:1460px;background:#fffffe"></div>
<div class="a" style="left:250px;top:970px;width:1516px;height:42px;border:4px solid #eeeeee;border-left:none"></div>
<div class="a" style="left:250px;top:592px;width:2px;height:378px;background:#939393"></div>
<div class="a" style="left:1738px;top:340px;width:1px;height:1460px;background:#ececec"></div>
<div class="a" style="left:1752px;top:886px;width:14px;height:42px;background:#f07167"></div>
<div class="a" style="left:1739px;top:968px;width:27px;height:4px;background:#404040"></div>
<div class="a m" style="left:96px;top:341px;width:93px;height:42px;line-height:42px;font-size:28px;text-align:right;color:#999999">1</div>
<div class="a m" style="left:251px;top:341px;height:42px;line-height:42px;font-size:28px;white-space:pre;color:#000"><span style="color:#0000ff">import</span> * <span style="color:#0000ff">as</span> wmill <span style="color:#0000ff">from</span> <span style="color:#a31515">'windmill-client'</span>;</div>
<div class="a m" style="left:96px;top:383px;width:93px;height:42px;line-height:42px;font-size:28px;text-align:right;color:#999999">2</div>
<div class="a m" style="left:251px;top:383px;height:42px;line-height:42px;font-size:28px;white-space:pre;color:#000"><span style="color:#0000ff">import</span> <span style="color:#0431fa">{</span> <span style="color:#2b7d85">S3Object</span> <span style="color:#0431fa">}</span> <span style="color:#0000ff">from</span> <span style="color:#a31515">'windmill-client'</span>;</div>
<div class="a m" style="left:96px;top:425px;width:93px;height:42px;line-height:42px;font-size:28px;text-align:right;color:#999999">3</div>
<div class="a m" style="left:96px;top:467px;width:93px;height:42px;line-height:42px;font-size:28px;text-align:right;color:#999999">4</div>
<div class="a m" style="left:251px;top:467px;height:42px;line-height:42px;font-size:28px;white-space:pre;color:#000"><span style="color:#0000ff">export async function</span> main<span style="color:#0431fa">(</span>example_file: <span style="color:#2b7d85">S3Object</span><span style="color:#0431fa">)</span> <span style="color:#0431fa">{</span></div>
<div class="a m" style="left:96px;top:509px;width:93px;height:42px;line-height:42px;font-size:28px;text-align:right;color:#999999">5</div>
<div class="a m" style="left:96px;top:551px;width:93px;height:42px;line-height:42px;font-size:28px;text-align:right;color:#999999">6</div>
<div class="a m" style="left:251px;top:551px;height:42px;line-height:42px;font-size:28px;white-space:pre;color:#000"><span style="color:#0000ff">const</span> file_content = <span style="color:#0000ff">await</span> wmill.loadS3File<span style="color:#319331">(</span>example_file<span style="color:#319331">)</span>;</div>
<div class="a m" style="left:96px;top:593px;width:93px;height:42px;line-height:42px;font-size:28px;text-align:right;color:#999999">7</div>
<div class="a m" style="left:96px;top:635px;width:93px;height:42px;line-height:42px;font-size:28px;text-align:right;color:#999999">8</div>
<div class="a m" style="left:251px;top:635px;height:42px;line-height:42px;font-size:28px;white-space:pre;color:#000">  <span style="color:#0000ff">const</span> decoder = <span style="color:#0000ff">new</span> <span style="color:#2b7d85">TextDecoder</span><span style="color:#319331">()</span>;</div>
<div class="a m" style="left:96px;top:677px;width:93px;height:42px;line-height:42px;font-size:28px;text-align:right;color:#999999">9</div>
<div class="a m" style="left:251px;top:677px;height:42px;line-height:42px;font-size:28px;white-space:pre;color:#000">  <span style="color:#0000ff">const</span> file_content_str = decoder.decode<span style="color:#319331">(</span>file_content<span style="color:#319331">)</span>;</div>
<div class="a m" style="left:96px;top:719px;width:93px;height:42px;line-height:42px;font-size:28px;text-align:right;color:#999999">10</div>
<div class="a m" style="left:251px;top:719px;height:42px;line-height:42px;font-size:28px;white-space:pre;color:#000">  console.log<span style="color:#319331">(</span>file_content_str<span style="color:#319331">)</span>;</div>
<div class="a m" style="left:96px;top:761px;width:93px;height:42px;line-height:42px;font-size:28px;text-align:right;color:#999999">11</div>
<div class="a m" style="left:96px;top:803px;width:93px;height:42px;line-height:42px;font-size:28px;text-align:right;color:#999999">12</div>
<div class="a m" style="left:251px;top:803px;height:42px;line-height:42px;font-size:28px;white-space:pre;color:#000">  <span style="color:#318032">// Or load the file lazily as a Blob</span></div>
<div class="a m" style="left:96px;top:845px;width:93px;height:42px;line-height:42px;font-size:28px;text-align:right;color:#999999">13</div>
<div class="a m" style="left:251px;top:845px;height:42px;line-height:42px;font-size:28px;white-space:pre;color:#000">  <span style="color:#0000ff">let</span> fileContentBlob = <span style="color:#0000ff">await</span> wmill.loadS3FileStream<span style="color:#319331">(</span>example_file<span style="color:#319331">)</span>;</div>
<div class="a m" style="left:96px;top:887px;width:93px;height:42px;line-height:42px;font-size:28px;text-align:right;color:#999999">14</div>
<div class="a m" style="left:251px;top:887px;height:42px;line-height:42px;font-size:28px;white-space:pre;color:#000">  console.log<span style="color:#319331">(</span><span style="color:#0000ff">await</span> fileContentBlob.text<span style="color:#7b3814">()</span><span style="color:#319331">)</span>;</div>
<div class="a m" style="left:96px;top:929px;width:93px;height:42px;line-height:42px;font-size:28px;text-align:right;color:#999999">15</div>
<div class="a m" style="left:96px;top:971px;width:93px;height:42px;line-height:42px;font-size:28px;text-align:right;color:#0b216f">16</div>
<div class="a m" style="left:251px;top:971px;height:42px;line-height:42px;font-size:28px;white-space:pre;color:#000"><span style="color:#0431fa">}</span></div>
<svg style="left:0;top:0" width="2880" height="1800"><path d="M588 926.5 L592.0 922.5 L596.0 926.5 L600.0 922.5 L604.0 926.5 L608.0 922.5 L612.0 926.5 L616.0 922.5 L620.0 926.5 L624.0 922.5 L628.0 926.5 L632.0 922.5 L636.0 926.5 L640.0 922.5 L644.0 926.5 L648.0 922.5 L652.0 926.5 L656.0 922.5 L660.0 926.5 L664.0 922.5 L668.0 926.5 L672.0 922.5 L676.0 926.5 L680.0 922.5 L684.0 926.5 L688.0 922.5 L692.0 926.5 L696.0 922.5 L700.0 926.5 L704.0 922.5 L708.0 926.5 L712.0 922.5 L716.0 926.5 L720.0 922.5 L724.0 926.5 L728.0 922.5 L732.0 926.5 L736.0 922.5 L740.0 926.5 L744.0 922.5 L748.0 926.5 L752.0 922.5 L756.0 926.5 L760.0 922.5 L764.0 926.5 L768.0 922.5 L772.0 926.5 L776.0 922.5 L780.0 926.5 L784.0 922.5 L788.0 926.5 L792.0 922.5 L796.0 926.5 L800.0 922.5 L804.0 926.5 L808.0 922.5 L812.0 926.5 L816.0 922.5 L820.0 926.5 L824.0 922.5 L828.0 926.5 L832.0 922.5 L836.0 926.5 L840.0 922.5" fill="none" stroke="#e51400" stroke-width="1.6"/></svg>
<!-- ======= RIGHT PANE ======= -->
<div class="a" style="left:1766px;top:340px;width:2px;height:1460px;background:#dadada"></div>
<div class="a" style="left:2217px;top:348px;width:214px;height:60px;border-radius:12px;background:#3b4a6b"></div>
<svg style="left:2242px;top:364px" width="28" height="28" viewBox="0 0 24 24" fill="none" stroke="#fff" stroke-width="2" stroke-linejoin="round"><polygon points="6 3 20 12 6 21 6 3"/></svg>
<div class="t" style="left:2289px;top:358px;font-size:24px;color:#fff;font-weight:bold;">Test</div>
<svg style="left:2357.5px;top:368px" width="19" height="19" viewBox="0 0 19 19"><path d="M6.5 15.25V3.75A2.75 2.75 0 1 0 3.75 6.5H15.25A2.75 2.75 0 1 0 12.5 3.75V15.25A2.75 2.75 0 1 0 15.25 12.5H3.75A2.75 2.75 0 1 0 6.5 15.25Z" fill="none" stroke="#b3bccc" stroke-width="2.2"/></svg>
<svg style="left:2380px;top:364px" width="26" height="26" viewBox="0 0 26 26"><path d="M22.3 4.3V14.5A3 3 0 0 1 19.3 17.5H3.6M9.6 11.4L3.6 17.5L9.6 23.6" fill="none" stroke="#b3bccc" stroke-width="2.4" stroke-linecap="round" stroke-linejoin="round"/></svg>
<div class="t" style="left:1784px;top:411px;font-size:32px;color:#2d3748;font-weight:bold;">example_file</div>
<div class="t" style="left:1976px;top:413px;font-size:32px;color:#e53e3e;">*</div>
<div class="t" style="left:2008px;top:414px;font-size:25px;color:#4b5563;font-style:italic;letter-spacing:1.2px;">object</div>
<div class="t" style="left:2564px;top:451px;font-size:25.5px;color:#1f2937;">Raw S3 object input</div>
<div class="a" style="left:2808px;top:456px;width:56px;height:32px;border-radius:16px;background:#d1d5db"></div>
<div class="a" style="left:2812px;top:460px;width:24px;height:24px;border-radius:12px;background:#fff"></div>
<div class="a" style="left:1784px;top:496px;width:1080px;height:156px;border-radius:8px;border:2px dashed #9ca3af"></div>
<svg style="left:2290.0px;top:508.0px" width="68" height="68" viewBox="0 0 24 24" fill="none" stroke="#4a5568" stroke-width="2.0" stroke-linecap="round" stroke-linejoin="round"><path d="M15 2H6a2 2 0 0 0-2 2v16a2 2 0 0 0 2 2h12a2 2 0 0 0 2-2V7Z"/><path d="M14 2v4a2 2 0 0 0 2 2h4"/><path d="M12 12v6"/><path d="m15 15-3-3-3 3"/></svg>
<div class="t" style="left:2003px;top:597px;font-size:34.2px;color:#4a5568;">Drag and drop files here or click to browse</div>
<div class="t" style="left:2764px;top:648px;font-size:24px;color:#dc2626;">Required</div>
<div class="a" style="left:1768px;top:861px;width:1112px;height:2px;background:#e5e7eb"></div>
<div class="t" style="left:1800px;top:875px;font-size:24.6px;color:#2d3748;">Logs &amp; Result</div>
<div class="t" style="left:2018px;top:875px;font-size:25.7px;color:#2d3748;">History</div>
<div class="a" style="left:1768px;top:925px;width:1112px;height:427px;background:#f3f4f6"></div>
<div class="a" style="left:1768px;top:923px;width:1112px;height:2px;background:#e5e7eb"></div>
<div class="a" style="left:1768px;top:919px;width:218px;height:4px;background:#3f4a5e"></div>
<div class="a" style="left:1768px;top:1352px;width:1112px;height:2px;background:#e5e7eb"></div>
<svg style="left:2655.0px;top:945.0px" width="24" height="24" viewBox="0 0 24 24" fill="none" stroke="#2d3748" stroke-width="2.2" stroke-linecap="round" stroke-linejoin="round"><path d="m21 21-6-6m6 6v-4.8m0 4.8h-4.8"/><path d="M3 16.2V21m0 0h4.8M3 21l6-6"/><path d="M21 7.8V3m0 0h-4.8M21 3l-6 6"/><path d="M3 7.8V3m0 0h4.8M3 3l6 6"/></svg>
<div class="t" style="left:2696px;top:936px;font-size:25.4px;color:#4b5563;">Auto scroll</div>
<svg style="left:2837.0px;top:946.0px" width="22" height="22" viewBox="0 0 24 24" fill="none" stroke="#111" stroke-width="3.6" stroke-linecap="round" stroke-linejoin="round"><path d="M20 6 9 17l-5-5"/></svg>
<div class="t" style="left:1783px;top:1002px;font-size:24px;color:#2d3748;font-family:'Liberation Mono',monospace;">No logs are available yet</div>
<div class="t" style="left:1784px;top:1370px;font-size:29.7px;color:#4a5568;">Test to see the result here</div>
<svg style="left:2835.0px;top:1374.5px" width="30" height="30" viewBox="0 0 24 24" fill="none" stroke="#4a5568" stroke-width="1.8" stroke-linecap="round" stroke-linejoin="round"><circle cx="12" cy="12" r="10"/><path d="M12 16v-4"/><path d="M12 8h.01"/></svg>
<div class="a" style="left:96px;top:338px;width:2784px;height:2px;background:#e5e7eb"></div>
</body></html>
